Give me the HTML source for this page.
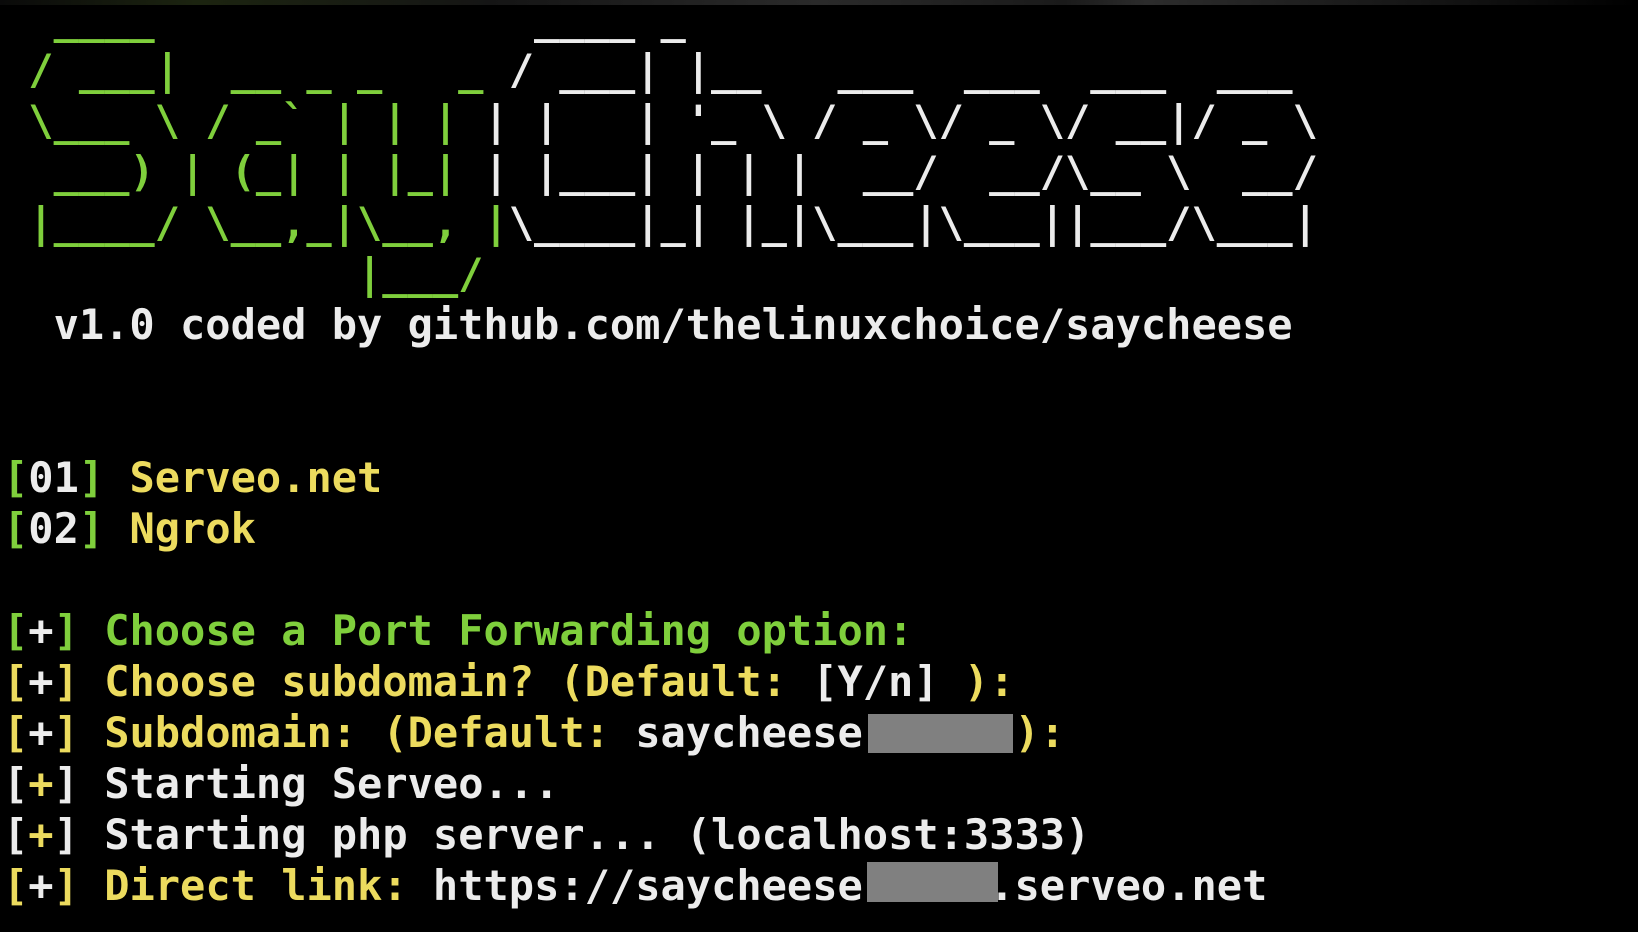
<!DOCTYPE html>
<html><head><meta charset="utf-8">
<style>
html,body{margin:0;padding:0;background:#000;width:1638px;height:932px;overflow:hidden;position:relative}
.bar{position:absolute;left:0;top:0;width:1638px;height:5px;background:linear-gradient(90deg,#0a0a0a 0%,#1c2410 12%,#151515 30%,#2a2a2a 50%,#1a1a1a 65%,#2c2c2c 70%,#111 90%,#000 100%)}
pre{position:absolute;left:3px;top:-7px;margin:0;font-family:"DejaVu Sans Mono","Liberation Mono",monospace;font-weight:bold;font-size:42px;line-height:51px;color:#ececec;white-space:pre}
.g{color:#7fcf3c}.y{color:#ecdb5e}.w{color:#ececec}
.box{position:absolute;background:#808080}
</style></head><body>
<div class="bar"></div>
<pre><span class="g">  ____             </span><span class="w">  ____ _</span>
<span class="g"> / ___|  __ _ _   _</span><span class="w"> / ___| |__   ___  ___  ___  ___</span>
<span class="g"> \___ \ / _` | | | </span><span class="w">| |   | '_ \ / _ \/ _ \/ __|/ _ \</span>
<span class="g">  ___) | (_| | |_| </span><span class="w">| |___| | | |  __/  __/\__ \  __/</span>
<span class="g"> |____/ \__,_|\__, |</span><span class="w">\____|_| |_|\___|\___||___/\___|</span>
<span class="g">              |___/</span>
<span class="w">  v1.0 coded by github.com/thelinuxchoice/saycheese</span>


<span class="g">[</span><span class="w">01</span><span class="g">]</span> <span class="y">Serveo.net</span>
<span class="g">[</span><span class="w">02</span><span class="g">]</span> <span class="y">Ngrok</span>

<span class="g">[</span><span class="w">+</span><span class="g">]</span> <span class="g">Choose a Port Forwarding option:</span>
<span class="y">[</span><span class="w">+</span><span class="y">]</span> <span class="y">Choose subdomain? (Default: </span><span class="w">[Y/n]</span><span class="y"> ):</span>
<span class="y">[</span><span class="w">+</span><span class="y">]</span> <span class="y">Subdomain: (Default: </span><span class="w">saycheese</span>      <span class="y">):</span>
<span class="w">[</span><span class="y">+</span><span class="w">]</span> <span class="w">Starting Serveo...</span>
<span class="w">[</span><span class="y">+</span><span class="w">]</span> <span class="w">Starting php server... (localhost:3333)</span>
<span class="y">[</span><span class="w">+</span><span class="y">]</span> <span class="y">Direct link: </span><span class="w">https://saycheese     .serveo.net</span></pre>
<div class="box" style="left:868px;top:714px;width:145px;height:39px"></div>
<div class="box" style="left:867px;top:862px;width:131px;height:40px"></div>
</body></html>
